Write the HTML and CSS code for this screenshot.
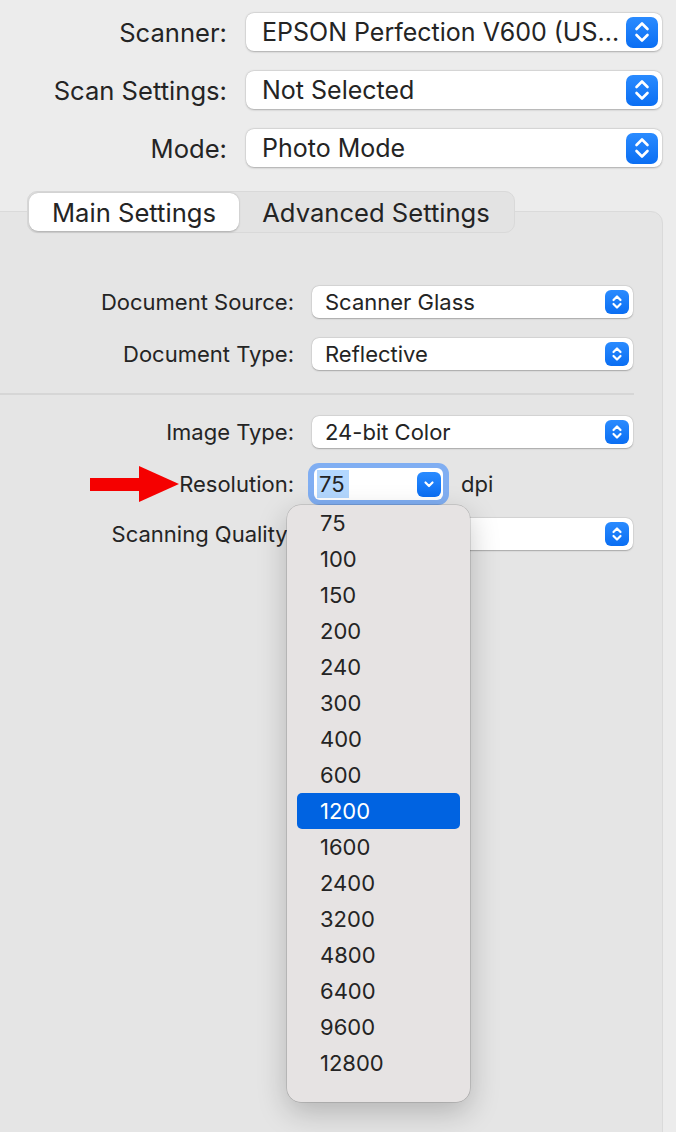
FILE: index.html
```html
<!DOCTYPE html>
<html>
<head>
<meta charset="utf-8">
<link rel="stylesheet" href="styles.css">
</head>
<body>
<div class="window">
  <div class="top">
    <div class="row-lg">
      <div class="label-lg">Scanner:</div>
      <div class="select-lg"><span class="val">EPSON Perfection V600 (US...</span><span class="stepper-lg"><svg viewBox="0 0 32 32" width="32" height="32"><path d="M10.5 13 L16 7.5 L21.5 13 M10.5 19 L16 24.5 L21.5 19" fill="none" stroke="#fff" stroke-width="2.6" stroke-linecap="round" stroke-linejoin="round"/></svg></span></div>
    </div>
    <div class="row-lg">
      <div class="label-lg">Scan Settings:</div>
      <div class="select-lg"><span class="val">Not Selected</span><span class="stepper-lg"><svg viewBox="0 0 32 32" width="32" height="32"><path d="M10.5 13 L16 7.5 L21.5 13 M10.5 19 L16 24.5 L21.5 19" fill="none" stroke="#fff" stroke-width="2.6" stroke-linecap="round" stroke-linejoin="round"/></svg></span></div>
    </div>
    <div class="row-lg">
      <div class="label-lg">Mode:</div>
      <div class="select-lg"><span class="val">Photo Mode</span><span class="stepper-lg"><svg viewBox="0 0 32 32" width="32" height="32"><path d="M10.5 13 L16 7.5 L21.5 13 M10.5 19 L16 24.5 L21.5 19" fill="none" stroke="#fff" stroke-width="2.6" stroke-linecap="round" stroke-linejoin="round"/></svg></span></div>
    </div>
  </div>

  <div class="tabs">
    <div class="tab active">Main Settings</div>
    <div class="tab">Advanced Settings</div>
  </div>

  <div class="panel">
    <div class="row">
      <div class="label">Document Source:</div>
      <div class="select"><span class="val">Scanner Glass</span><span class="stepper"><svg viewBox="0 0 24 24" width="24" height="24"><path d="M8.5 10 L12 6.5 L15.5 10 M8.5 14 L12 17.5 L15.5 14" fill="none" stroke="#fff" stroke-width="2.2" stroke-linecap="round" stroke-linejoin="round"/></svg></span></div>
    </div>
    <div class="row">
      <div class="label">Document Type:</div>
      <div class="select"><span class="val">Reflective</span><span class="stepper"><svg viewBox="0 0 24 24" width="24" height="24"><path d="M8.5 10 L12 6.5 L15.5 10 M8.5 14 L12 17.5 L15.5 14" fill="none" stroke="#fff" stroke-width="2.2" stroke-linecap="round" stroke-linejoin="round"/></svg></span></div>
    </div>
    <div class="sep"></div>
    <div class="row">
      <div class="label">Image Type:</div>
      <div class="select"><span class="val">24-bit Color</span><span class="stepper"><svg viewBox="0 0 24 24" width="24" height="24"><path d="M8.5 10 L12 6.5 L15.5 10 M8.5 14 L12 17.5 L15.5 14" fill="none" stroke="#fff" stroke-width="2.2" stroke-linecap="round" stroke-linejoin="round"/></svg></span></div>
    </div>
    <div class="row row-res">
      <div class="label">Resolution:</div>
      <div class="combo-ring">
        <div class="combo"><span class="sel-text">75</span><span class="combo-btn"><svg viewBox="0 0 24 24" width="24" height="24"><path d="M8.5 10.5 L12 14 L15.5 10.5" fill="none" stroke="#fff" stroke-width="2.2" stroke-linecap="round" stroke-linejoin="round"/></svg></span></div>
      </div>
      <div class="unit">dpi</div>
    </div>
    <div class="row">
      <div class="label">Scanning Quality:</div>
      <div class="select"><span class="val"></span><span class="stepper"><svg viewBox="0 0 24 24" width="24" height="24"><path d="M8.5 10 L12 6.5 L15.5 10 M8.5 14 L12 17.5 L15.5 14" fill="none" stroke="#fff" stroke-width="2.2" stroke-linecap="round" stroke-linejoin="round"/></svg></span></div>
    </div>
  </div>

  <svg class="arrow" viewBox="0 0 90 36" width="90" height="36"><rect x="0" y="12" width="52" height="13" fill="#f50000"/><polygon points="49,0 89,18 49,36" fill="#f50000"/></svg>

  <ul class="menu">
    <li>75</li>
    <li>100</li>
    <li>150</li>
    <li>200</li>
    <li>240</li>
    <li>300</li>
    <li>400</li>
    <li>600</li>
    <li class="hl">1200</li>
    <li>1600</li>
    <li>2400</li>
    <li>3200</li>
    <li>4800</li>
    <li>6400</li>
    <li>9600</li>
    <li>12800</li>
  </ul>
</div>
</body>
</html>
```

FILE: styles.css
```css
* { box-sizing: border-box; }
html, body { margin: 0; padding: 0; }
body {
  background: #ececec;
  font-family: Inter, "Noto Sans", sans-serif;
  color: #242424;
  width: 676px;
  height: 1132px;
  overflow: hidden;
}
.window { position: relative; width: 676px; height: 1132px; }

.top { padding-top: 13px; display: flex; flex-direction: column; gap: 20px; }
.row-lg { display: grid; grid-template-columns: 227px 416px; grid-template-rows: 38px; column-gap: 19px; align-items: center; height: 38px; }
.label-lg { text-align: right; font-size: 25.6px; white-space: nowrap; }
.select-lg {
  height: 38px; background: #fff; border-radius: 8px;
  box-shadow: 0 0.5px 2px rgba(0,0,0,0.25), 0 0 0 0.5px rgba(0,0,0,0.06);
  display: flex; align-items: center; justify-content: space-between;
  padding: 0 4px 0 16px; font-size: 25px;
}
.val { white-space: nowrap; overflow: hidden; }
.stepper-lg {
  flex: none;
  width: 32px; height: 31px; border-radius: 7px;
  background: linear-gradient(#2a8bff, #0a6ef3);
  display: flex; align-items: center; justify-content: center;
}

.tabs {
  position: relative; z-index: 1;
  margin: 24px 0 0 27px; width: 488px; height: 42px;
  background: #e3e3e3; border: 1px solid #d9d9d9; border-radius: 10px;
  display: flex; align-items: center; padding: 1px;
}
.tab { font-size: 25.6px; height: 38px; display: flex; align-items: center; justify-content: center; white-space: nowrap; }
.tab.active {
  width: 210px; background: #fff; border-radius: 9px;
  box-shadow: 0 0.5px 2px rgba(0,0,0,0.25);
}
.tab:not(.active) { flex: 1; }

.panel {
  margin: -22px 0 0 -12px; width: 675px; height: 960px;
  background: #e5e5e5; border: 1px solid #dadada; border-radius: 0 12px 0 0;
  padding-top: 74px;
}
.row { display: grid; grid-template-columns: 305px 321px; grid-template-rows: 32px; column-gap: 18px; align-items: center; height: 32px; margin-bottom: 20px; }
.label { text-align: right; font-size: 22px; white-space: nowrap; }
.select {
  height: 32px; background: #fff; border-radius: 7px;
  box-shadow: 0 0.5px 1.5px rgba(0,0,0,0.25), 0 0 0 0.5px rgba(0,0,0,0.06);
  display: flex; align-items: center; justify-content: space-between;
  padding: 0 4px 0 13px; font-size: 22px;
}
.stepper {
  flex: none;
  width: 24px; height: 24px; border-radius: 6px;
  background: linear-gradient(#2a8bff, #0a6ef3);
  display: flex; align-items: center; justify-content: center;
}
.sep { width: 645px; height: 2px; background: #d6d6d6; margin: 23px 0 21px; }

.row-res { grid-template-columns: 305px auto auto; justify-content: start; margin-bottom: 18px; }
.combo-ring {
  width: 141px; height: 42px; margin-left: -4px;
  border-radius: 11px; background: #80aef2; padding: 5px 6px;
}
.combo {
  height: 32px; background: #fff; border-radius: 6px;
  display: flex; align-items: center; justify-content: space-between;
  padding: 0 2px 0 3px; font-size: 22px;
}
.sel-text { background: #b3d7fe; height: 28px; line-height: 28px; padding: 0 2px; width: 32px; }
.combo-btn {
  width: 24px; height: 25px; border-radius: 6px;
  background: linear-gradient(#2a8bff, #0a6ef3);
  display: flex; align-items: center; justify-content: center;
}
.unit { font-size: 22px; margin-left: -6px; }

.arrow { position: absolute; left: 90px; top: 466px; }

.menu {
  position: absolute; left: 287px; top: 505px; width: 183px; height: 597px;
  margin: 0; padding: 0 10px; list-style: none;
  background: #e6e3e3; border-radius: 14px;
  box-shadow: 0 0 0 0.5px rgba(0,0,0,0.22), 0 10px 30px rgba(0,0,0,0.22);
}
.menu li {
  height: 36px; line-height: 36px; font-size: 22px; padding-left: 23px;
  border-radius: 5px;
}
.menu li.hl { background: #0063e1; color: #fff; }
```
